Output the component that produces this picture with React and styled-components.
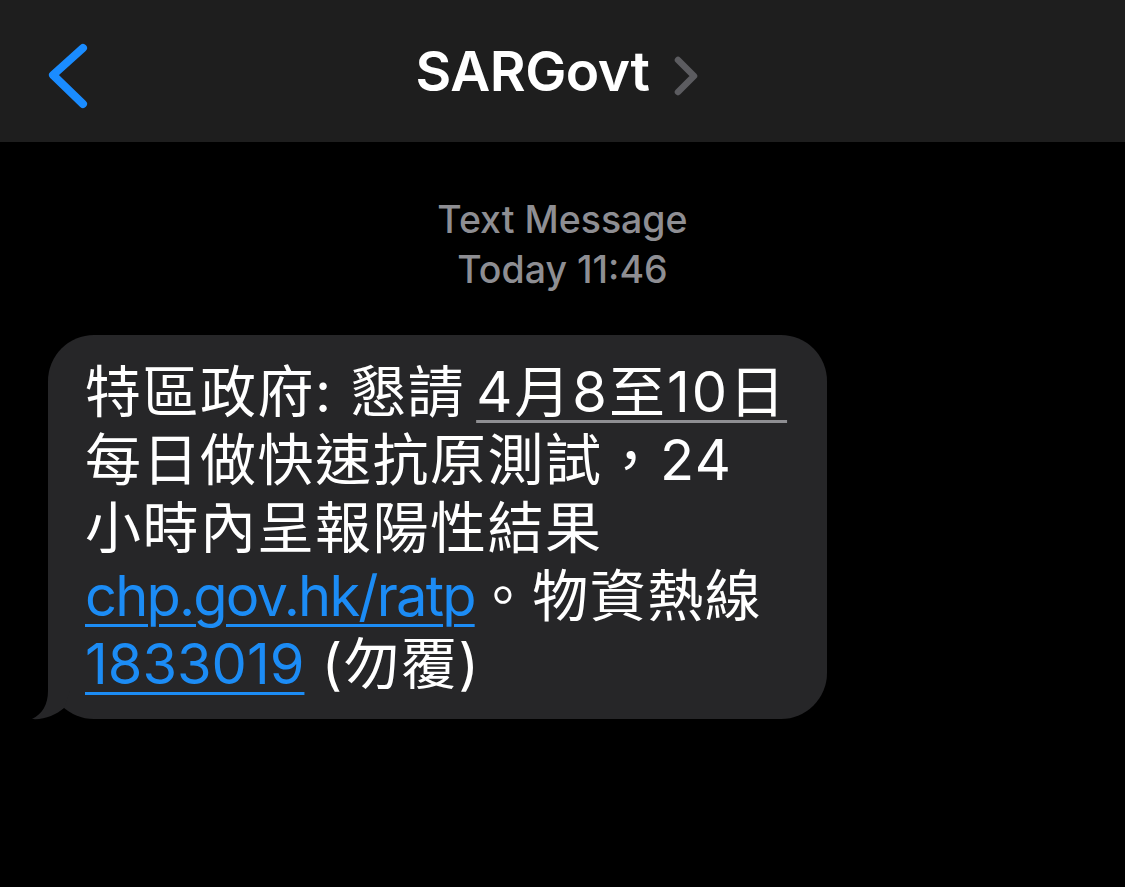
import React from "react";
import styled, { createGlobalStyle } from "styled-components";

const Global = createGlobalStyle`
  html, body { margin: 0; padding: 0; background: #000; }
  body { font-family: "Inter", "Noto Sans CJK TC", sans-serif; -webkit-font-smoothing: antialiased; }
  #root { min-height: 887px; background: #000; }
`;

const NavBar = styled.header`
  height: 142px;
  background: #1e1e1e;
  display: grid;
  grid-template-columns: 1fr auto 1fr;
  align-items: center;
`;

const BackButton = styled.button`
  justify-self: start;
  margin-left: 44px;
  margin-top: 12px;
  background: none;
  border: 0;
  padding: 0;
  width: 48px;
  height: 70px;
  display: flex;
  align-items: center;
  justify-content: center;
`;

const TitleGroup = styled.div`
  display: flex;
  align-items: center;
  gap: 24px;
  margin-left: -10px;
`;

const Title = styled.h1`
  margin: 0;
  font-family: "Inter", sans-serif;
  font-weight: 600;
  font-size: 55px;
  letter-spacing: -0.5px;
  color: #fff;
  line-height: 1;
`;

const Disclosure = styled.svg`
  margin-top: 10px;
`;

const Main = styled.main`
  display: flex;
  flex-direction: column;
  padding: 53px 0 0 48px;
`;

const Stamp = styled.div`
  align-self: center;
  margin-left: -48px;
  text-align: center;
  font-family: "Inter", sans-serif;
  font-weight: 500;
  font-size: 37.5px;
  line-height: 50px;
  color: #8e8e93;
`;

const Bubble = styled.div`
  position: relative;
  margin-top: 40px;
  width: fit-content;
  background: #262628;
  border-radius: 46px;
  padding: 23px 40px 21px 37px;
  color: #fff;
  font-family: "Inter", "Noto Sans CJK TC", sans-serif;
  font-size: 56px;
  line-height: 68px;
  letter-spacing: 1.5px;
  white-space: nowrap;
`;

const Tail = styled.svg`
  position: absolute;
  left: -18px;
  bottom: 0;
  width: 40px;
  height: 48px;
  overflow: visible;
`;

const DateMark = styled.span`
  margin-left: -6px;
  letter-spacing: 2px;
  text-decoration: underline;
  text-decoration-color: #8f8f93;
  text-decoration-thickness: 3px;
  text-underline-offset: 8px;
`;

const Link = styled.a`
  color: #1c8cf5;
  letter-spacing: ${(p) => p.$track}px;
  text-decoration: underline;
  text-decoration-thickness: 3px;
  text-underline-offset: 8px;
`;

export default function App() {
  return (
    <>
      <Global />
      <NavBar>
        <BackButton aria-label="Back">
          <svg width="48" height="70" viewBox="0 0 48 70">
            <polyline
              points="39,6 9,33 39,62"
              fill="none"
              stroke="#1a8cff"
              strokeWidth="8"
              strokeLinecap="round"
              strokeLinejoin="round"
            />
          </svg>
        </BackButton>
        <TitleGroup>
          <Title>SARGovt</Title>
          <Disclosure width="26" height="40" viewBox="0 0 26 40">
            <polyline
              points="5,4 21,20 5,36"
              fill="none"
              stroke="#5c5c60"
              strokeWidth="6.5"
              strokeLinecap="round"
              strokeLinejoin="round"
            />
          </Disclosure>
        </TitleGroup>
        <div />
      </NavBar>
      <Main>
        <Stamp>
          Text Message
          <br />
          Today 11:46
        </Stamp>
        <Bubble>
          <Tail viewBox="0 0 40 48">
            <path d="M18,0 L18,20 C18,34 12,43 2,48 C14,49 26,44 34,37 L40,20 L40,0 Z" fill="#262628" />
          </Tail>
          特區政府: 懇請 <DateMark>4月8至10日</DateMark>
          <br />
          每日做快速抗原測試，24
          <br />
          小時內呈報陽性結果
          <br />
          <Link href="#" $track={-1.8}>chp.gov.hk/ratp</Link>。物資熱線
          <br />
          <Link href="#" $track={0}>1833019</Link> (勿覆)
        </Bubble>
      </Main>
    </>
  );
}
